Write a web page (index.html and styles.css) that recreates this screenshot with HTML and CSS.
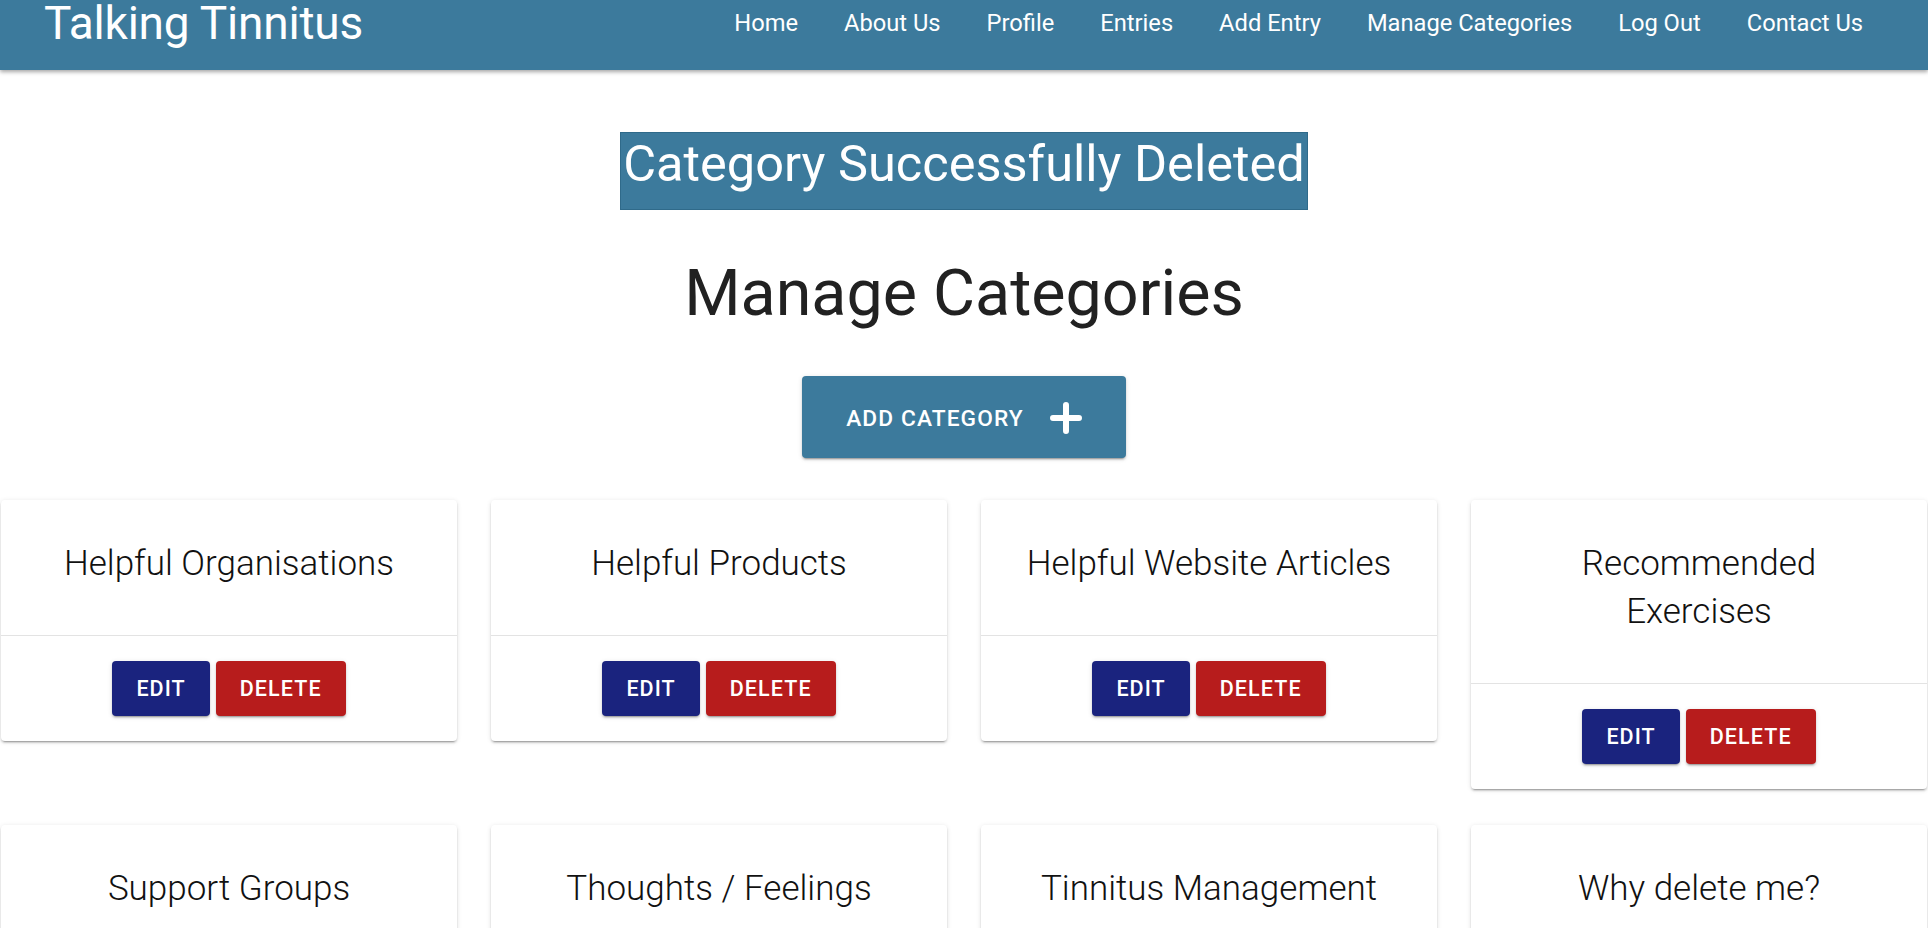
FILE: index.html
```html
<!DOCTYPE html>
<html lang="en">
<head>
<meta charset="utf-8">
<title>Talking Tinnitus - Manage Categories</title>
<link rel="stylesheet" href="styles.css">
</head>
<body>
<header class="navbar">
  <a class="brand" href="#">Talking Tinnitus</a>
  <nav class="nav">
    <a href="#">Home</a>
    <a href="#">About Us</a>
    <a href="#">Profile</a>
    <a href="#">Entries</a>
    <a href="#">Add Entry</a>
    <a href="#">Manage Categories</a>
    <a href="#">Log Out</a>
    <a href="#">Contact Us</a>
  </nav>
</header>
<main class="main">
  <div class="alert">Category Successfully Deleted</div>
  <h1 class="title">Manage Categories</h1>
  <button class="add-btn"><span>ADD CATEGORY</span>
    <svg class="plus" viewBox="0 0 32 32" width="32" height="32" aria-hidden="true"><path d="M16 3v26M3 16h26" stroke="#fff" stroke-width="6" stroke-linecap="round" fill="none"/></svg>
  </button>
  <section class="cards">
    <div class="card"><div class="card-title">Helpful Organisations</div><div class="card-actions"><button class="btn edit">EDIT</button><button class="btn delete">DELETE</button></div></div>
    <div class="card"><div class="card-title">Helpful Products</div><div class="card-actions"><button class="btn edit">EDIT</button><button class="btn delete">DELETE</button></div></div>
    <div class="card"><div class="card-title">Helpful Website Articles</div><div class="card-actions"><button class="btn edit">EDIT</button><button class="btn delete">DELETE</button></div></div>
    <div class="card"><div class="card-title">Recommended<br>Exercises</div><div class="card-actions"><button class="btn edit">EDIT</button><button class="btn delete">DELETE</button></div></div>
    <div class="card"><div class="card-title">Support Groups</div><div class="card-actions"><button class="btn edit">EDIT</button><button class="btn delete">DELETE</button></div></div>
    <div class="card"><div class="card-title">Thoughts / Feelings</div><div class="card-actions"><button class="btn edit">EDIT</button><button class="btn delete">DELETE</button></div></div>
    <div class="card"><div class="card-title">Tinnitus Management</div><div class="card-actions"><button class="btn edit">EDIT</button><button class="btn delete">DELETE</button></div></div>
    <div class="card"><div class="card-title">Why delete me?</div><div class="card-actions"><button class="btn edit">EDIT</button><button class="btn delete">DELETE</button></div></div>
  </section>
</main>
</body>
</html>
```
FILE: styles.css
```css
* { box-sizing: border-box; }
html, body { margin: 0; padding: 0; }
body {
  font-family: Roboto, "Liberation Sans", sans-serif;
  background: #fff;
  color: #212121;
  overflow: hidden;
}
.navbar {
  height: 70px;
  background: #3c7a9c;
  display: flex;
  justify-content: space-between;
  align-items: flex-start;
  box-shadow: 0 2px 4px rgba(0,0,0,0.35);
  position: relative;
  z-index: 2;
}
.brand {
  color: #fff;
  text-decoration: none;
  font-size: 46px;
  line-height: 46px;
  margin-left: 44px;
  letter-spacing: -0.2px;
}
.nav {
  display: flex;
  gap: 46px;
  padding-right: 65px;
  padding-top: 12px;
}
.nav a {
  color: #fff;
  text-decoration: none;
  font-size: 23.7px;
  line-height: 23px;
}
.main {
  display: flex;
  flex-direction: column;
  align-items: center;
}
.alert {
  margin-top: 62px;
  background: #3c7a9c;
  color: #fff;
  font-size: 50.5px;
  height: 78px;
  line-height: 62px;
  padding: 0 2px;
  border: 1px solid #2f6a8a;
}
.title {
  margin: 45px 0 0;
  font-size: 64.6px;
  font-weight: 400;
  line-height: 77px;
  color: #212121;
}
.add-btn {
  margin-top: 44px;
  width: 324px;
  height: 82px;
  padding-top: 3px;
  background: #3c7a9c;
  color: #fff;
  border: none;
  border-radius: 4px;
  font-family: Roboto, "Liberation Sans", sans-serif;
  font-size: 22.7px;
  font-weight: 500;
  letter-spacing: 0.05em;
  display: flex;
  align-items: center;
  justify-content: center;
  gap: 26px;
  box-shadow: 0 3px 1px -2px rgba(0,0,0,.2), 0 2px 2px 0 rgba(0,0,0,.14), 0 1px 5px 0 rgba(0,0,0,.12);
}
.plus { display: block; }
.cards {
  margin-top: 42px;
  width: 100%;
  display: flex;
  flex-wrap: wrap;
  align-items: flex-start;
  gap: 36px 34px;
  padding-left: 1px;
}
.card {
  width: 456px;
  background: #fff;
  border-radius: 4px;
  box-shadow: 0 3px 1px -2px rgba(0,0,0,.2), 0 2px 2px 0 rgba(0,0,0,.14), 0 1px 5px 0 rgba(0,0,0,.12);
}
.card-title {
  padding: 40px 12px 47px;
  font-size: 35px;
  font-weight: 300;
  line-height: 48px;
  text-align: center;
  color: #111;
  border-bottom: 1px solid #e3e3e3;
}
.card-actions {
  padding: 25px 16px;
  display: flex;
  justify-content: center;
  gap: 6px;
}
.btn {
  height: 55px;
  padding: 0 24px;
  border: none;
  border-radius: 4px;
  color: #fff;
  font-family: Roboto, "Liberation Sans", sans-serif;
  font-size: 21.5px;
  font-weight: 500;
  letter-spacing: 0.05em;
  box-shadow: 0 3px 1px -2px rgba(0,0,0,.2), 0 2px 2px 0 rgba(0,0,0,.14), 0 1px 5px 0 rgba(0,0,0,.12);
}
.edit { background: #1a237e; }
.delete { background: #b71c1c; }
```
